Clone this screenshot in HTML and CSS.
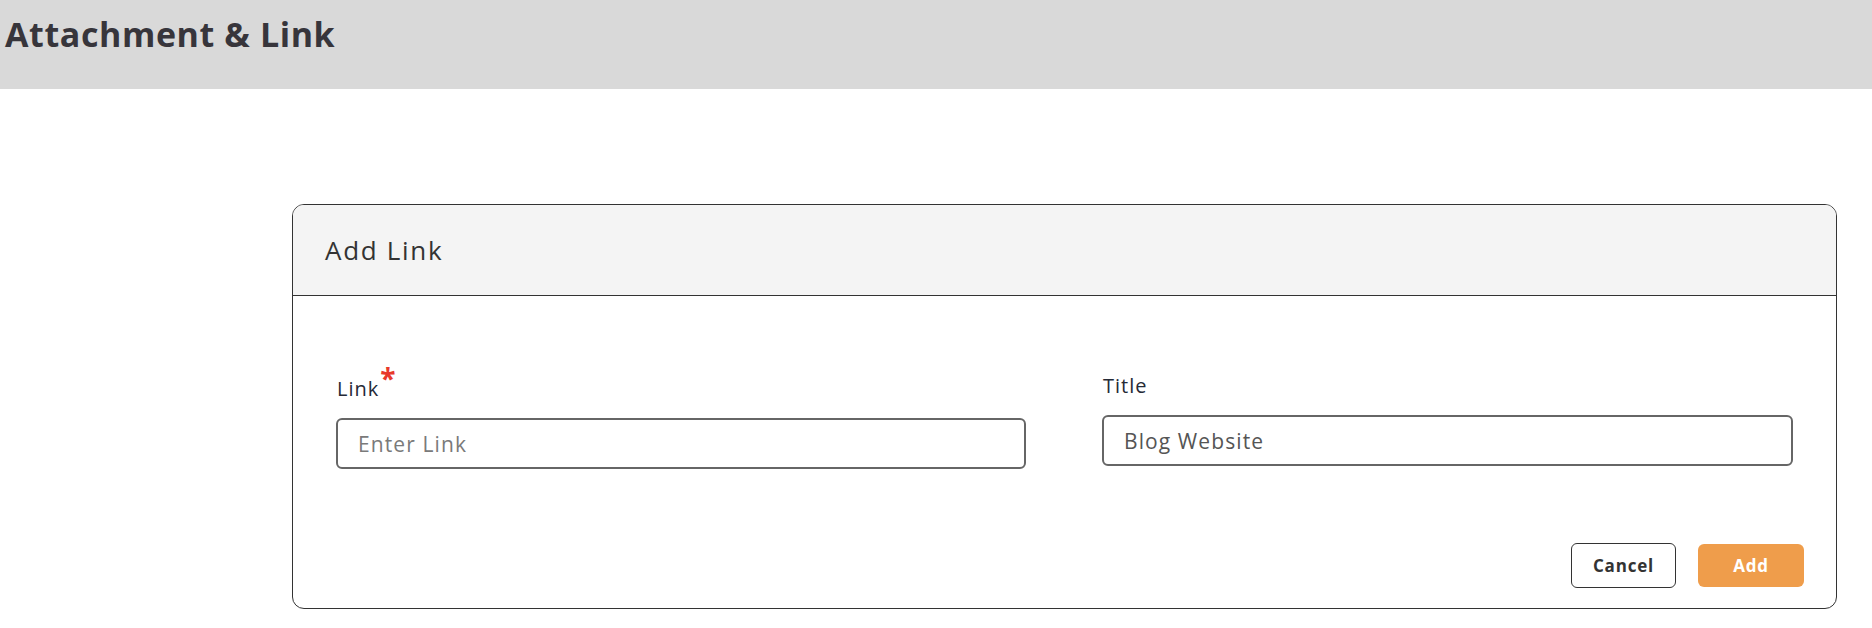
FILE: index.html
```html
<!DOCTYPE html>
<html>
<head>
<meta charset="utf-8">
<link rel="stylesheet" href="styles.css">
</head>
<body>
<header class="topbar">
  <h1 class="page-title">Attachment &amp; Link</h1>
</header>
<main class="content">
  <section class="card">
    <div class="card-head">Add Link</div>
    <div class="card-body">
      <div class="fields">
        <div class="field field--req">
          <label class="label">Link<span class="req">*</span></label>
          <div class="input placeholder">Enter Link</div>
        </div>
        <div class="field">
          <label class="label">Title</label>
          <div class="input">Blog Website</div>
        </div>
      </div>
      <div class="actions">
        <button class="btn btn-cancel">Cancel</button>
        <button class="btn btn-add">Add</button>
      </div>
    </div>
  </section>
</main>
</body>
</html>
```
FILE: styles.css
```css
* { box-sizing: border-box; }
html, body { margin: 0; padding: 0; background: #fff; }
body { font-family: "Open Sans", "Noto Sans", sans-serif; color: #333; }

.topbar {
  height: 89px;
  background: #d9d9d9;
  padding: 13px 0 0 5px;
}
.page-title {
  margin: 0;
  font-size: 34px;
  line-height: 42px;
  font-weight: 700;
  color: #37353b;
  letter-spacing: 0.6px;
}

.content {
  padding: 115px 35px 0 292px;
}
.card {
  width: 1545px;
  border: 1px solid #333;
  border-radius: 12px;
  overflow: hidden;
}
.card-head {
  height: 91px;
  background: #f4f4f4;
  border-bottom: 1px solid #333;
  padding: 0 0 0 32px;
  display: flex;
  align-items: center;
  font-size: 26px;
  font-weight: 400;
  letter-spacing: 1.7px;
  color: #333;
}
.card-body {
  padding: 0 0 20px 0;
}
.fields {
  display: grid;
  grid-template-columns: 690px 691px;
  column-gap: 76px;
  padding: 78px 43px 0 43px;
  align-items: start;
}
.field { display: flex; flex-direction: column; }
.field--req { padding-top: 3px; }
.label {
  font-size: 20px;
  font-weight: 500;
  color: #252a36;
  line-height: 24px;
  letter-spacing: 1px;
  margin-bottom: 17px;
  padding-left: 1px;
}
.req {
  color: #e8392a;
  font-size: 28px;
  font-weight: 700;
  line-height: 0;
  position: relative;
  top: -7px;
  margin-left: 1px;
}
.input {
  height: 51px;
  border: 2px solid #666;
  border-radius: 6px;
  padding: 0 20px;
  display: flex;
  align-items: center;
  font-size: 21px;
  letter-spacing: 1.1px;
  color: #555;
}
.input.placeholder { color: #7a7a7a; }

.actions {
  display: flex;
  justify-content: flex-end;
  gap: 22px;
  padding: 74px 32px 0 0;
  align-items: center;
}
.btn {
  font-family: "Open Sans", "Noto Sans", sans-serif;
  font-size: 17px;
  font-weight: 700;
  letter-spacing: 0.8px;
  border-radius: 6px;
  cursor: pointer;
}
.btn-cancel {
  width: 105px;
  height: 45px;
  background: #fff;
  border: 1px solid #333;
  color: #333;
}
.btn-add {
  width: 106px;
  height: 43px;
  background: #ef9d4b;
  border: none;
  color: #fff;
}
```
